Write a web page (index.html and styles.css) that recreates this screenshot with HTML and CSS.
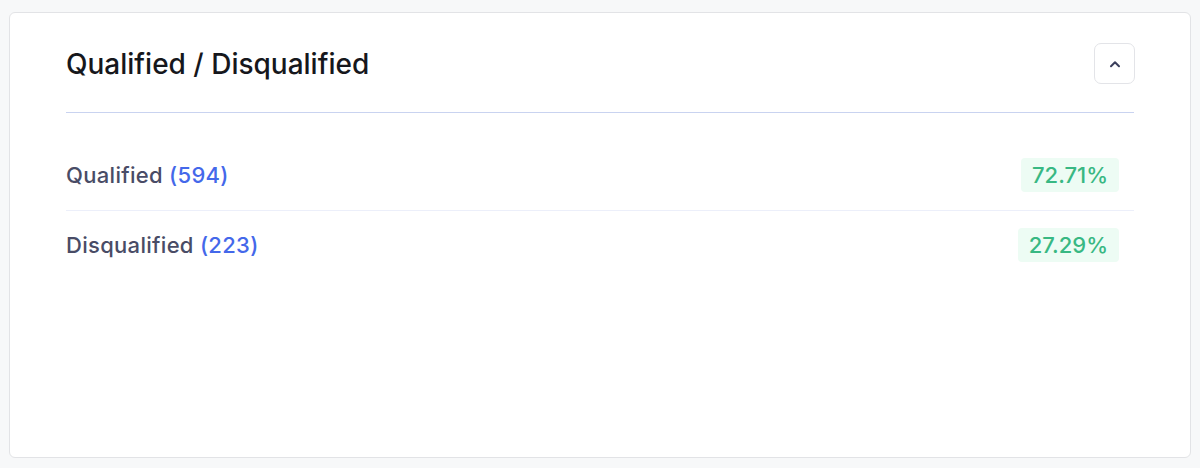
FILE: index.html
```html
<!DOCTYPE html>
<html lang="en">
<head>
<meta charset="utf-8">
<title>Qualified / Disqualified</title>
<link rel="stylesheet" href="styles.css">
</head>
<body>
<section class="card">
  <header class="card-header">
    <h2 class="card-title">Qualified / Disqualified</h2>
    <button class="collapse-btn" type="button" aria-label="Collapse">
      <svg width="12" height="8" viewBox="0 0 12 8" fill="none">
        <path d="M2 6.2 L6 2.2 L10 6.2" stroke="#3b3f5c" stroke-width="2" stroke-linecap="round" stroke-linejoin="round"/>
      </svg>
    </button>
  </header>
  <ul class="rows">
    <li class="row">
      <span class="label">Qualified <span class="count">(594)</span></span>
      <span class="badge">72.71%</span>
    </li>
    <li class="row">
      <span class="label">Disqualified <span class="count">(223)</span></span>
      <span class="badge">27.29%</span>
    </li>
  </ul>
</section>
</body>
</html>
```
FILE: styles.css
```css
html, body {
  margin: 0;
  padding: 0;
}
body {
  background: #f7f8f9;
  font-family: Inter, "Noto Sans", "Liberation Sans", sans-serif;
  padding: 12px 9px 10px 9px;
  box-sizing: border-box;
  height: 468px;
}
.card {
  box-sizing: border-box;
  height: 446px;
  background: #ffffff;
  border: 1px solid #e2e3e6;
  border-radius: 6px;
  padding: 30px 56px 0 56px;
}
.card-header {
  display: flex;
  align-items: center;
  justify-content: space-between;
  padding-bottom: 28px;
  border-bottom: 1px solid #c9d3f0;
}
.card-title {
  margin: 0;
  font-size: 28px;
  line-height: 34px;
  font-weight: 500;
  color: #16171c;
}
.collapse-btn {
  width: 41px;
  height: 41px;
  box-sizing: border-box;
  border: 1px solid #e3e4e8;
  border-radius: 7px;
  background: #ffffff;
  display: flex;
  align-items: center;
  justify-content: center;
  padding: 0;
  margin-right: -1px;
}
.rows {
  list-style: none;
  margin: 28px 0 0 0;
  padding: 0;
}
.row {
  display: flex;
  align-items: center;
  justify-content: space-between;
  padding: 17px 15px 18px 0;
  border-bottom: 1px solid #eceffa;
}
.row:last-child {
  border-bottom: none;
}
.label {
  font-size: 22px;
  letter-spacing: 0.3px;
  font-weight: 500;
  color: #494c66;
}
.count {
  color: #4468ea;
}
.badge {
  display: inline-flex;
  align-items: center;
  height: 34px;
  padding: 0 11px;
  border-radius: 4px;
  background: #edfcf4;
  color: #38b883;
  font-size: 22px;
  font-weight: 500;
}
```
